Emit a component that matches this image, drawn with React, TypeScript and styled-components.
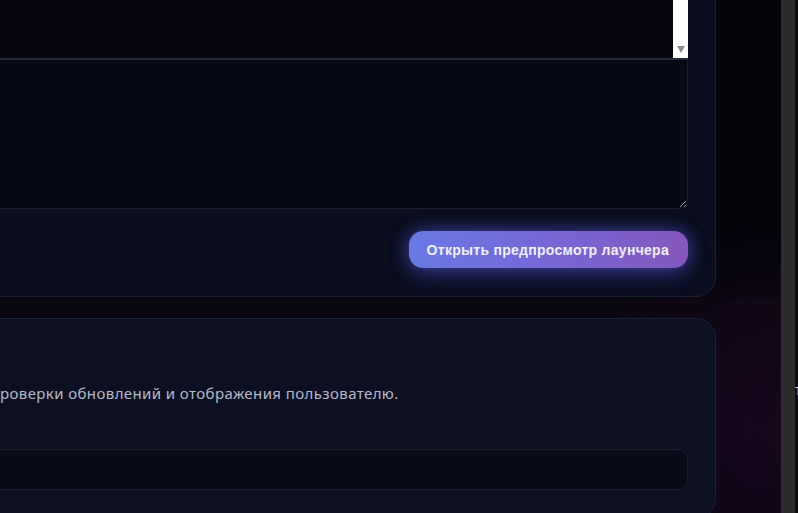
import React from "react";
import styled, { createGlobalStyle } from "styled-components";

const Global = createGlobalStyle`
  html, body { margin: 0; padding: 0; background: #04050c; overflow: hidden; }
  #root { height: 513px; }
`;

const Page = styled.div`
  display: flex;
  width: 798px;
  height: 513px;
  overflow: hidden;
`;

const Viewport = styled.div`
  width: 781px;
  flex: none;
  height: 100%;
  overflow: hidden;
  background:
    radial-gradient(ellipse 260px 300px at 770px 430px, rgba(40, 8, 42, 0.55), transparent 70%),
    linear-gradient(180deg, #04040b 0px, #04040b 296px, #0a0610 300px, #070510 513px);
`;

const Column = styled.div<{ $offset: number }>`
  margin-left: ${(p) => -p.$offset}px;
  margin-top: -91px;
  width: ${(p) => 716 + p.$offset}px;
  display: flex;
  flex-direction: column;
  gap: 21px;
`;

const Card = styled.section<{ $tone?: string }>`
  box-sizing: border-box;
  background: ${(p) => p.$tone || "#0b0e1f"};
  border: 1px solid #1b2034;
  border-radius: 20px;
  padding: 28px 27px 28px 28px;
  display: flex;
  flex-direction: column;
`;

const ListBox = styled.div`
  box-sizing: border-box;
  height: 121px;
  background: #05050f;
  border-bottom: 1px solid #1f2b36;
  display: flex;
  justify-content: flex-end;
`;

const ScrollTrack = styled.div`
  width: 15px;
  background: #ffffff;
  display: flex;
  flex-direction: column;
  justify-content: flex-end;
  align-items: center;
  padding-bottom: 5px;
  box-sizing: border-box;
`;

const ArrowDown = styled.div`
  width: 0;
  height: 0;
  border-left: 4.5px solid transparent;
  border-right: 4.5px solid transparent;
  border-top: 7px solid #8c8c8c;
`;

const Area = styled.textarea`
  box-sizing: border-box;
  display: block;
  width: 100%;
  height: 150px;
  margin: 0;
  background: #070915;
  border: 1px solid #1a1f30;
  border-top-color: #1f2b36;
  border-radius: 0 0 10px 10px;
  color: #c8cad6;
  resize: vertical;
  outline: none;
`;

const Actions = styled.div`
  display: flex;
  justify-content: flex-end;
  margin-top: 22px;
`;

const PreviewButton = styled.button`
  height: 37px;
  padding: 0 19px 0 18px;
  border: none;
  border-radius: 14px;
  background: linear-gradient(90deg, #6879e6 0%, #7568d8 45%, #8557bd 100%);
  color: #f2f0fc;
  font-family: "Liberation Sans", Arial, sans-serif;
  font-weight: 700;
  font-size: 14px;
  letter-spacing: 0.28px;
  box-shadow: 0 0 18px rgba(105, 110, 255, 0.45), 0 6px 22px rgba(80, 80, 220, 0.3);
  cursor: pointer;
`;

const Description = styled.p`
  margin: 36px 0 0 0;
  font-family: "Noto Sans", "Open Sans", sans-serif;
  font-size: 15px;
  line-height: 20px;
  letter-spacing: 0.4px;
  color: #b5b9c9;
  white-space: nowrap;
`;

const TextInput = styled.input`
  box-sizing: border-box;
  height: 41px;
  width: 100%;
  margin-top: 46px;
  background: #080a17;
  border: 1px solid #1a1f30;
  border-radius: 10px;
  outline: none;
  color: #c8cad6;
`;

const Scrollbar = styled.div`
  width: 14px;
  flex: none;
  background: #2c2c2c;
`;

const Edge = styled.div`
  flex: 1;
  background: #0c0c14;
  overflow: hidden;
  padding-top: 382px;
  font-family: "Liberation Sans", Arial, sans-serif;
  font-size: 14px;
  color: #d0d0d8;
  white-space: nowrap;
`;

export default function App() {
  const offset = 179;
  return (
    <>
      <Global />
      <Page>
        <Viewport>
          <Column $offset={offset}>
            <Card>
              <ListBox>
                <ScrollTrack>
                  <ArrowDown />
                </ScrollTrack>
              </ListBox>
              <Area defaultValue="" />
              <Actions>
                <PreviewButton>Открыть предпросмотр лаунчера</PreviewButton>
              </Actions>
            </Card>
            <Card $tone="#0c1022">
              <Description>
                Используется для проверки обновлений и отображения пользователю.
              </Description>
              <TextInput defaultValue="" />
            </Card>
          </Column>
        </Viewport>
        <Scrollbar />
        <Edge>т</Edge>
      </Page>
    </>
  );
}
